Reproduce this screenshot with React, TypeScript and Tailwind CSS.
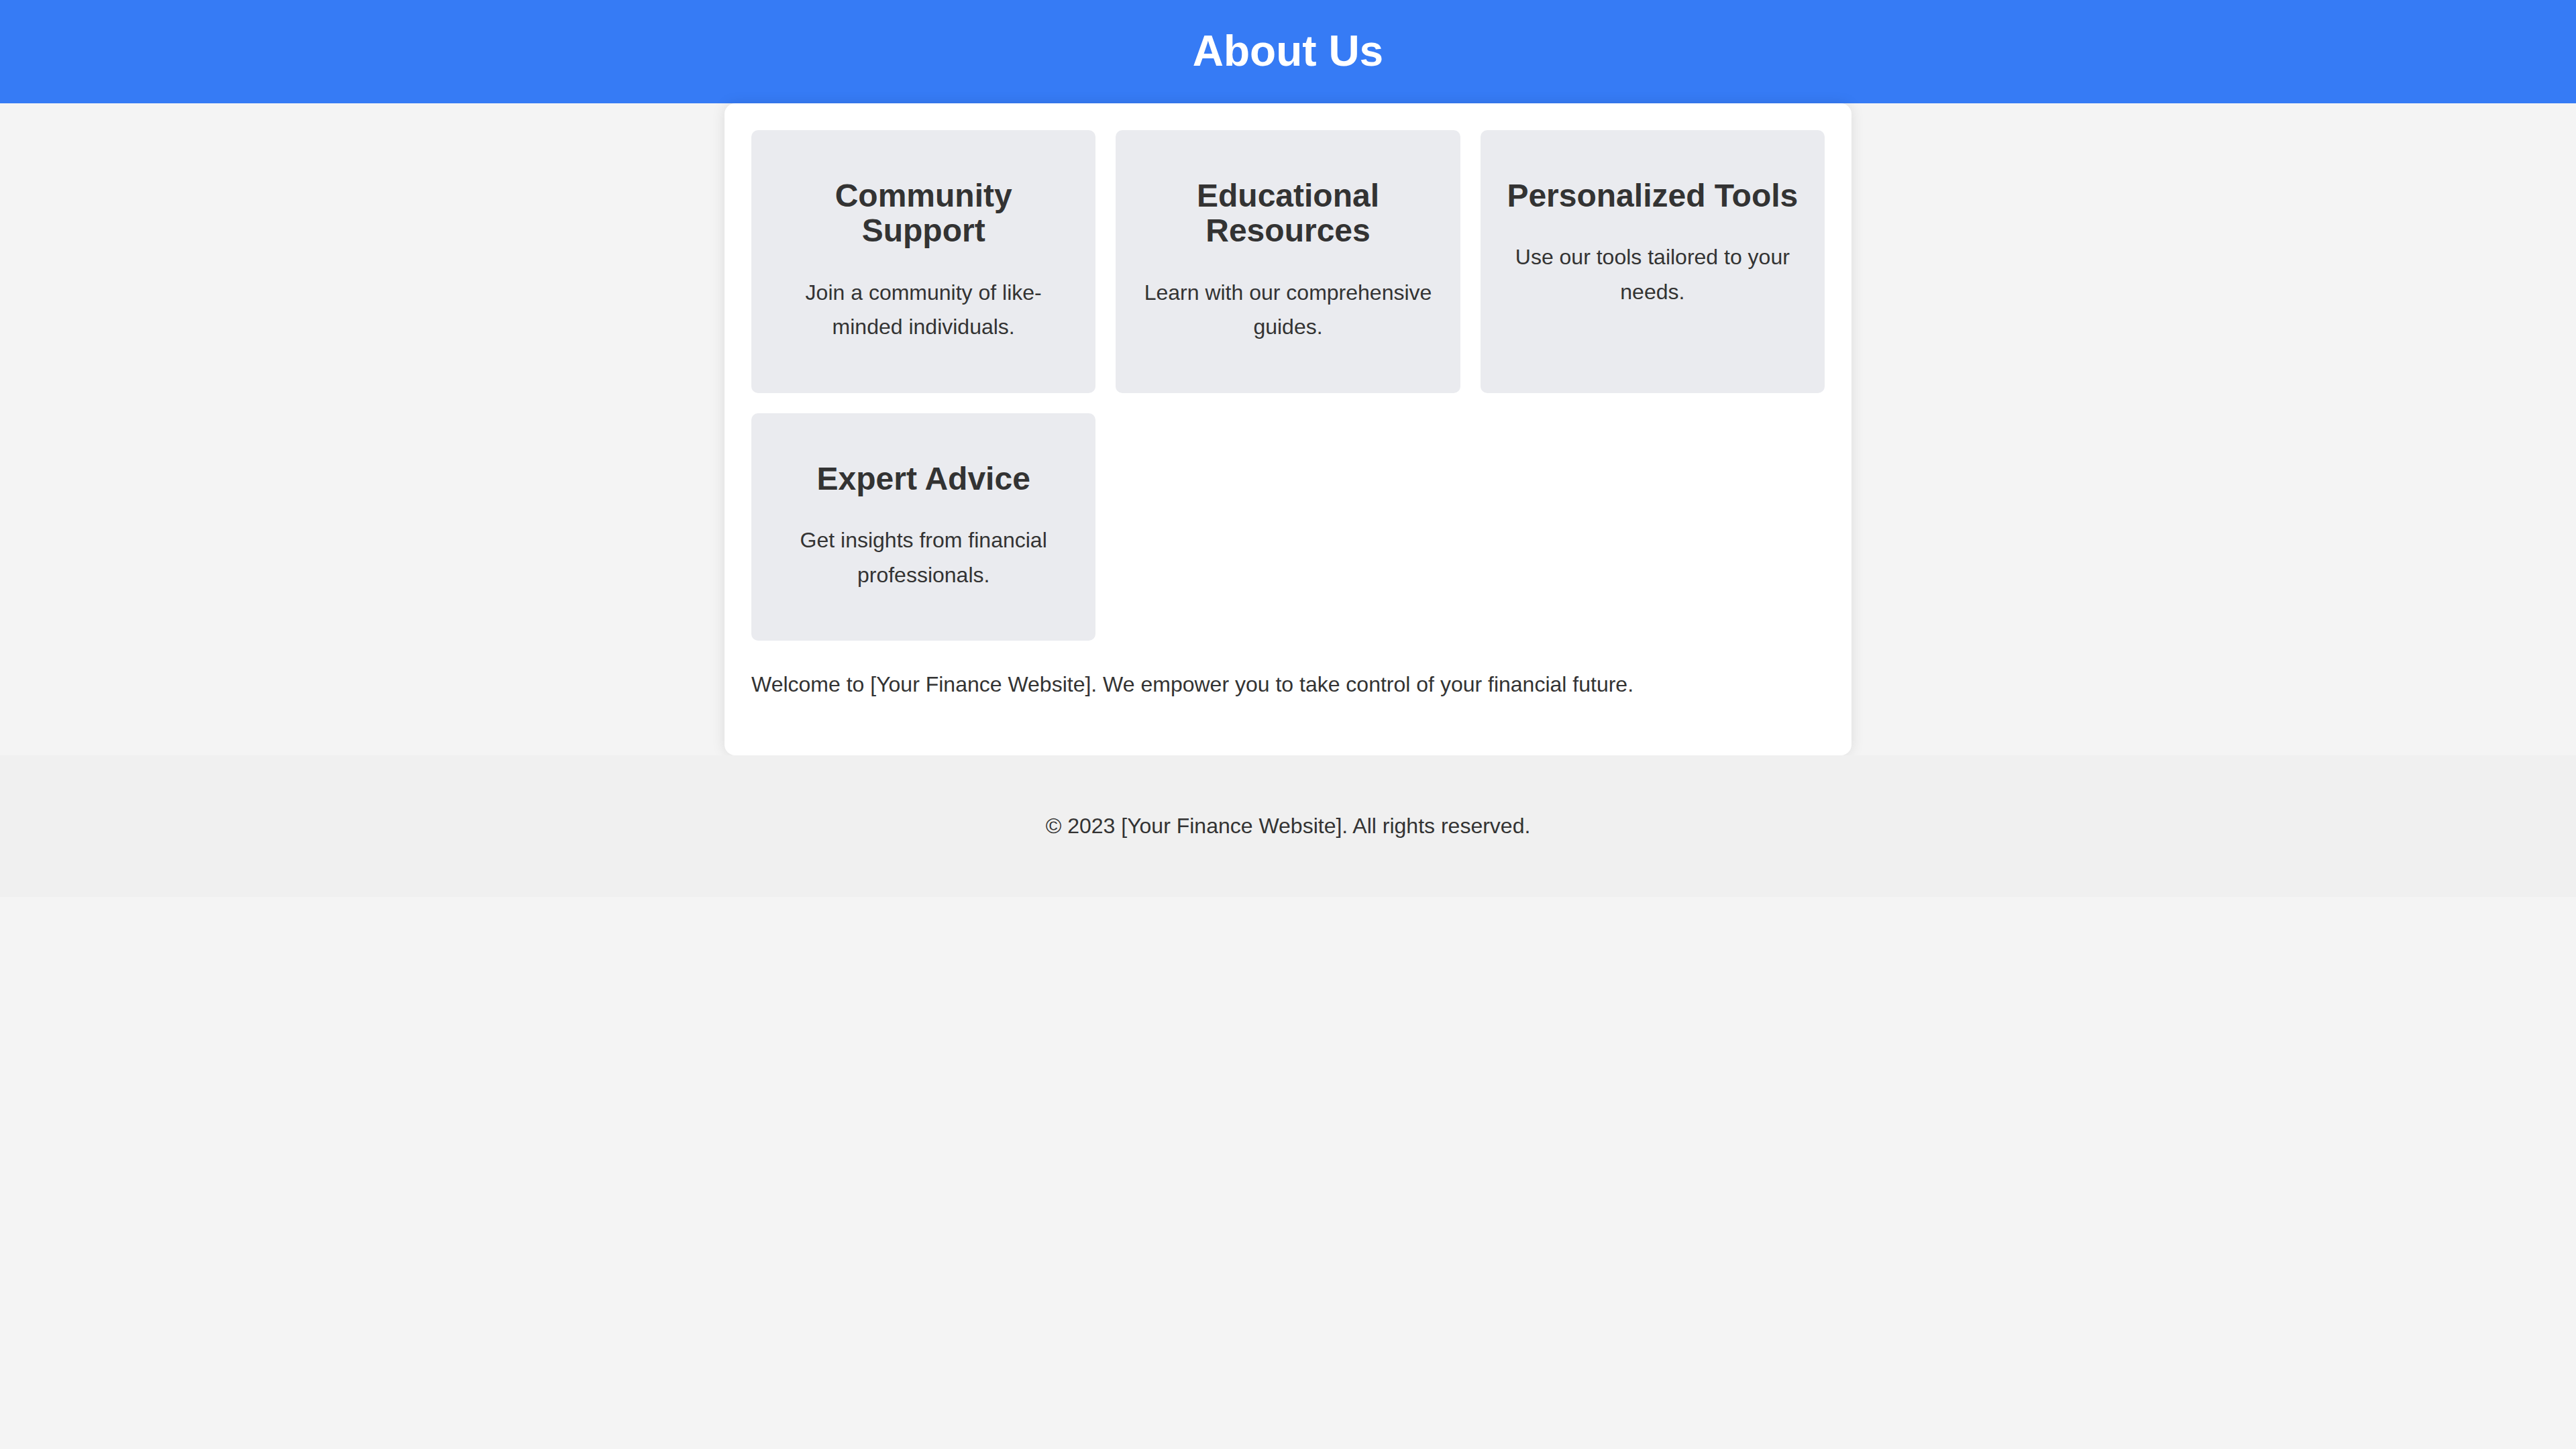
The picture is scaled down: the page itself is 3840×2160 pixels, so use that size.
import React from "react";

type Feature = {
  title: string;
  text: string;
};

const features: Feature[] = [
  { title: "Community Support", text: "Join a community of like-minded individuals." },
  { title: "Educational Resources", text: "Learn with our comprehensive guides." },
  { title: "Personalized Tools", text: "Use our tools tailored to your needs." },
  { title: "Expert Advice", text: "Get insights from financial professionals." },
];

function FeatureCard({ feature }: { feature: Feature }) {
  return (
    <div className="rounded-[5px] bg-[#eaebef] px-4 py-5 text-center">
      <h2 className="mt-4 mb-5 text-[24px] font-bold leading-[1.1] text-[#333]">{feature.title}</h2>
      <p className="my-4 text-[16px] leading-[1.6] text-[#333]">{feature.text}</p>
    </div>
  );
}

export default function App() {
  return (
    <div className="min-h-screen bg-[#f4f4f4] font-['Liberation_Sans',Arial,sans-serif] text-[#333]">
      {/* page was laid out at 2x, keep natural px values below */}
      <div className="[zoom:2]">
        <header className="bg-[#367bf5] p-5 text-center">
          <h1 className="m-0 text-[32px] font-bold leading-[1.15] text-white">About Us</h1>
        </header>

        <main className="mx-auto w-[840px] rounded-lg bg-white px-5 pt-5 pb-5 shadow-[0_0_10px_rgba(0,0,0,0.1)]">
          <div className="grid grid-cols-3 gap-[15px]">
            {features.map((f) => (
              <FeatureCard key={f.title} feature={f} />
            ))}
          </div>
          <p className="mt-5 mb-5 text-[16px] leading-[1.6] text-[#333]">
            Welcome to [Your Finance Website]. We empower you to take control of your financial future.
          </p>
        </main>

        <footer className="bg-[#f0f0f0] py-10 text-center">
          <p className="text-[16px] leading-[1.6] text-[#333]">© 2023 [Your Finance Website]. All rights reserved.</p>
        </footer>
      </div>
    </div>
  );
}
